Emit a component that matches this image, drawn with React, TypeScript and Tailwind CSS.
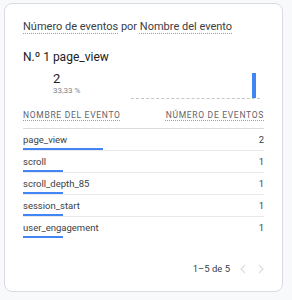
import React from 'react';

type EventRow = { name: string; count: number };

const rows: EventRow[] = [
  { name: 'page_view', count: 2 },
  { name: 'scroll', count: 1 },
  { name: 'scroll_depth_85', count: 1 },
  { name: 'session_start', count: 1 },
  { name: 'user_engagement', count: 1 },
];

const total = rows.reduce((s, r) => s + r.count, 0);

const Chevron: React.FC<{ dir: 'left' | 'right'; className?: string }> = ({ dir, className }) => (
  <svg width="6" height="10" viewBox="0 0 6 10" className={className}>
    <polyline
      points={dir === 'left' ? '5,1 1,5 5,9' : '1,1 5,5 1,9'}
      fill="none"
      stroke="#dadce0"
      strokeWidth="1.2"
    />
  </svg>
);

export default function App() {
  return (
    <div className="w-[292px] h-[300px] bg-[#f8f9fa] pt-[3px] pl-[4px] font-['Roboto',sans-serif]">
      <div className="w-[279px] h-[289px] bg-white border border-[#dadce0] rounded-[8px] px-[18px] pt-[16px]">
        <div className="text-[11px] leading-[14px] text-[#3c4043]">
          <span className="underline decoration-dotted decoration-[#9aa0a6] underline-offset-[3px]">Número de eventos</span>{' '}
          por{' '}
          <span className="underline decoration-dotted decoration-[#9aa0a6] underline-offset-[3px]">Nombre del evento</span>
        </div>

        <div className="mt-[15px] text-[12px] leading-[16px] text-[#202124]">N.º 1 page_view</div>

        <div className="mt-[6px] flex">
          <div className="ml-[30px] flex flex-col">
            <span className="text-[13px] leading-[15px] text-[#202124]">2</span>
            <span className="text-[8px] leading-[10px] text-[#80868b]">33,33 %</span>
          </div>
          <div className="ml-auto mr-[4px] w-[129px] h-[28px] flex items-end justify-end border-b border-dashed border-[#c4c7c5]">
            <div className="w-[4px] h-[25px] bg-[#4285f4] mr-[4px]" />
          </div>
        </div>

        <div className="mt-[10px] pb-[7px] flex justify-between border-b border-[#dadce0] text-[8.5px] leading-[12px] tracking-[0.7px] text-[#5f6368]">
          <span className="underline decoration-dotted decoration-[#9aa0a6] underline-offset-[2px]">NOMBRE DEL EVENTO</span>
          <span className="underline decoration-dotted decoration-[#9aa0a6] underline-offset-[2px]">NÚMERO DE EVENTOS</span>
        </div>

        <div>
          {rows.map((r, i) => (
            <div key={r.name} className={i < rows.length - 1 ? 'border-b border-[#e8eaed]' : ''}>
              <div className="pt-[4px] flex justify-between text-[9.5px] leading-[13px] text-[#3c4043]">
                <span>{r.name}</span>
                <span>{r.count}</span>
              </div>
              <div className="mt-[2px] h-[2px] bg-[#4285f4]" style={{ width: `${(r.count / total) * 100}%` }} />
            </div>
          ))}
        </div>

        <div className="mt-[24px] flex items-center justify-end text-[9.5px] leading-[13px] text-[#3c4043]">
          <span>1–5 de 5</span>
          <Chevron dir="left" className="ml-[10px]" />
          <Chevron dir="right" className="ml-[12px]" />
        </div>
      </div>
    </div>
  );
}
